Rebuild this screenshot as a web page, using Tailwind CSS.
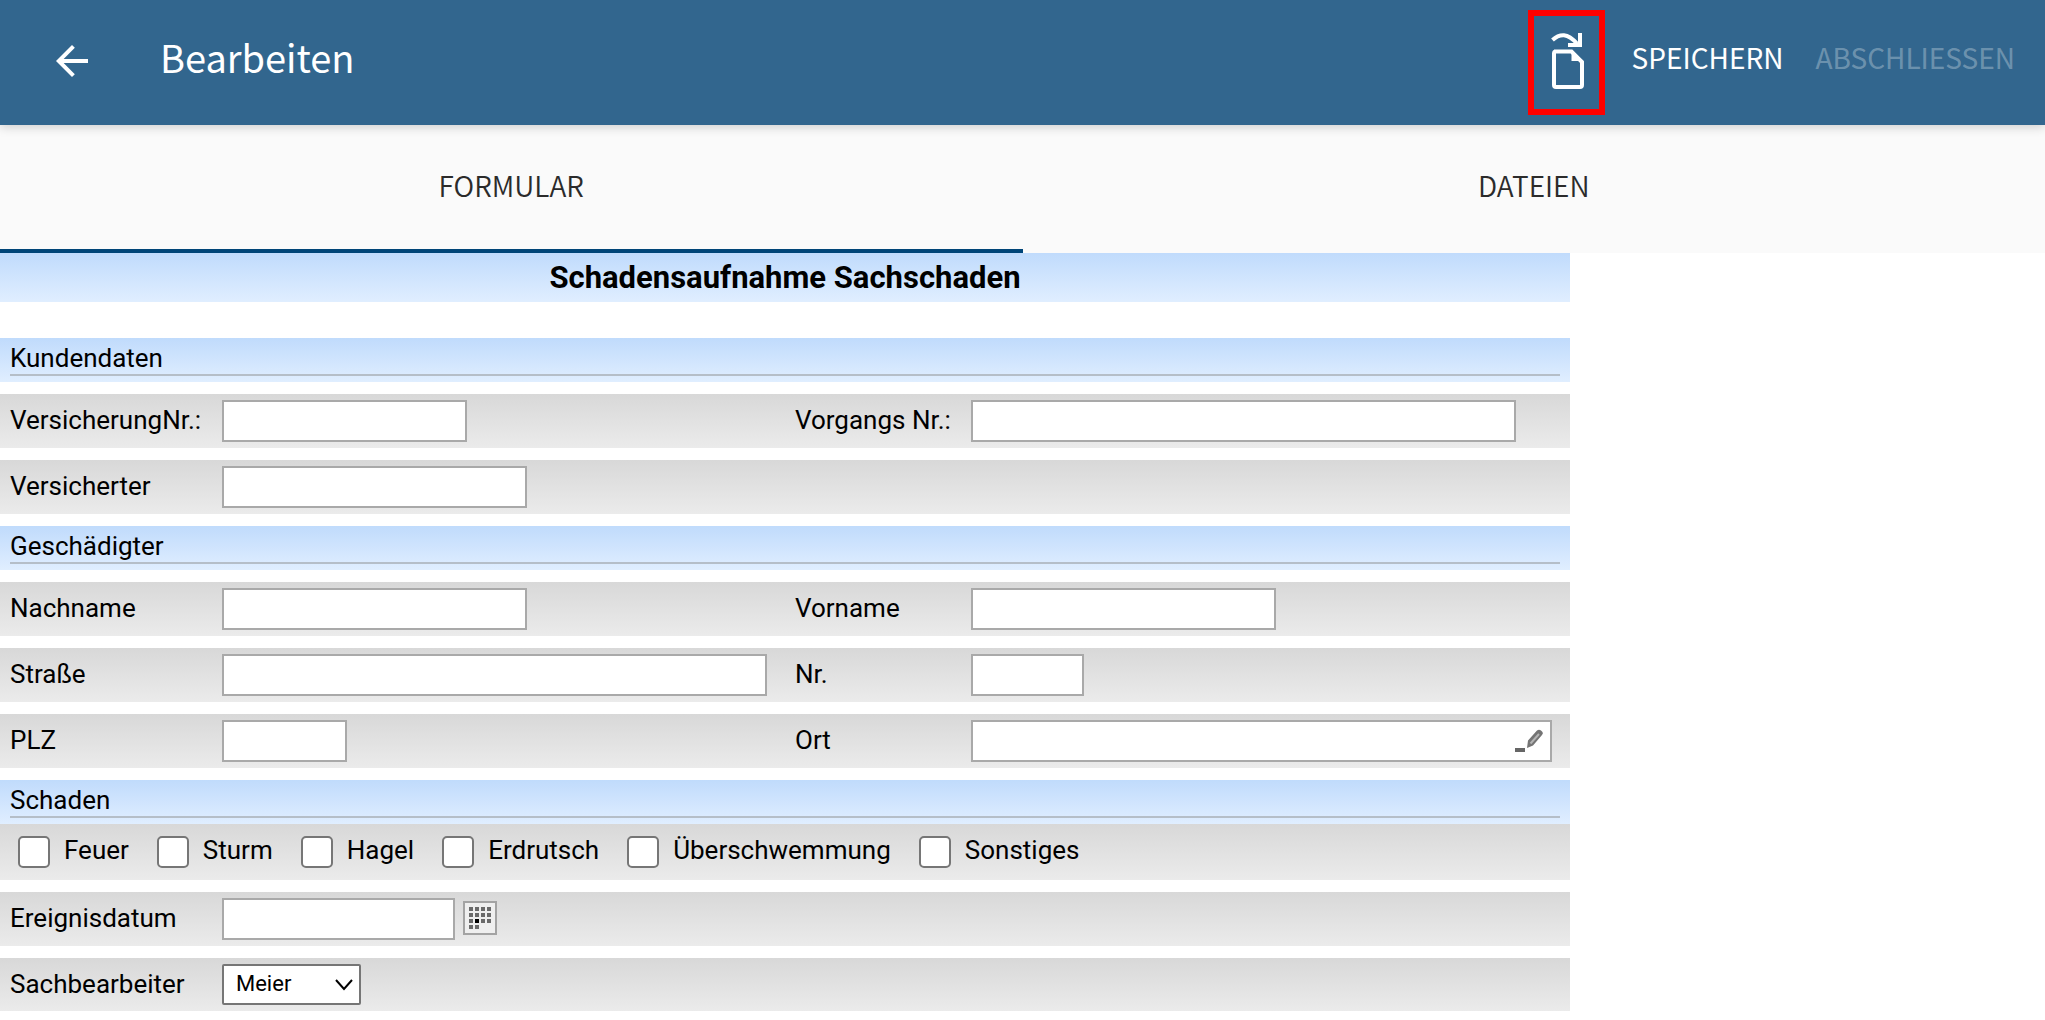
<!DOCTYPE html>
<html lang="de">
<head>
<meta charset="utf-8">
<meta name="viewport" content="width=device-width, initial-scale=1">
<title>Bearbeiten</title>
<script src="https://cdn.jsdelivr.net/npm/@tailwindcss/browser@4"></script>
</head>
<body class="bg-white text-black font-['Roboto',sans-serif] text-[26px] leading-8">

<header class="relative z-10 flex h-[125px] items-center bg-[#32668e] pb-1 pl-12 pr-[30px] text-white shadow-[0_2px_10px_rgba(0,0,0,0.18)] font-['Noto_Sans_CJK_SC','Noto_Sans',sans-serif]">
  <button type="button" aria-label="Zurück" class="flex size-12 items-center justify-center">
    <svg class="size-12" viewBox="0 0 24 24" fill="currentColor" aria-hidden="true"><path d="M20 11H7.830l5.590-5.590L12 4l-8 8 8 8 1.410-1.410L7.830 13H20z"/></svg>
  </button>
  <h1 class="ml-16 pb-2 text-[38px] leading-[48px]">Bearbeiten</h1>
  <div class="ml-auto flex items-center gap-[27px]">
    <button type="button" aria-label="Weiterleiten" class="mt-1 flex h-[105px] w-[77px] items-center justify-center border-6 border-[#ff0000] pb-[3px] pl-1">
      <svg class="h-[56px] w-[34px]" viewBox="0 0 34 56" fill="none" stroke="currentColor" aria-hidden="true">
        <path d="M1.500 7Q7 1.800 13 2.200Q19 2.800 26 10.500" stroke-width="4"/>
        <path d="M29 0V12H17" stroke-width="4"/>
        <path d="M3 18.500H20.500L31 29V52Q31 54 29 54H5Q3 54 3 52V20.500Q3 18.500 5 18.500" stroke-width="4"/>
        <path d="M20.500 17V28H32.500z" fill="currentColor" stroke="none"/>
      </svg>
    </button>
    <div class="flex gap-8 pb-2 text-[28px] leading-9">
      <button type="button">SPEICHERN</button>
      <button type="button" disabled class="text-white/30">ABSCHLIESSEN</button>
    </div>
  </div>
</header>

<nav class="grid h-32 grid-cols-2 bg-[#fafafa] text-[28px] font-[350] text-[#2b2b2b] font-['Noto_Sans_CJK_SC','Noto_Sans',sans-serif]">
  <a href="#formular" aria-current="page" class="flex items-center justify-center border-b-4 border-[#004578] pb-1">FORMULAR</a>
  <a href="#dateien" class="flex items-center justify-center border-b-4 border-transparent pb-1">DATEIEN</a>
</nav>

<form id="formular" class="w-full max-w-[1570px]">
  <h2 class="mb-9 flex h-[49px] items-center justify-center bg-linear-to-b from-[#c0dbfc] to-[#e0eeff] text-[31px] font-bold">Schadensaufnahme Sachschaden</h2>

  <div class="flex flex-col gap-3">
    <div class="h-11 bg-linear-to-b from-[#c0dbfc] to-[#e0eeff] px-[10px]">
      <h3 class="h-[38px] border-b-2 border-[#b5bec8] pt-1">Kundendaten</h3>
    </div>
    <div class="grid h-[54px] grid-cols-[212px_573px_176px_1fr] items-center bg-linear-to-b from-[#d8d8d8] to-[#ebebeb] px-[10px]">
      <label for="versnr" class="pb-[2px]">VersicherungNr.:</label>
      <input id="versnr" type="text" class="h-[42px] w-[245px] border-2 border-[#a9a9a9] bg-white px-2">
      <label for="vorgang" class="pb-[2px]">Vorgangs Nr.:</label>
      <input id="vorgang" type="text" class="h-[42px] w-[545px] border-2 border-[#a9a9a9] bg-white px-2">
    </div>
    <div class="grid h-[54px] grid-cols-[212px_573px_176px_1fr] items-center bg-linear-to-b from-[#d8d8d8] to-[#ebebeb] px-[10px]">
      <label for="versicherter" class="pb-[2px]">Versicherter</label>
      <input id="versicherter" type="text" class="h-[42px] w-[305px] border-2 border-[#a9a9a9] bg-white px-2">
    </div>

    <div class="h-11 bg-linear-to-b from-[#c0dbfc] to-[#e0eeff] px-[10px]">
      <h3 class="h-[38px] border-b-2 border-[#b5bec8] pt-1">Geschädigter</h3>
    </div>
    <div class="grid h-[54px] grid-cols-[212px_573px_176px_1fr] items-center bg-linear-to-b from-[#d8d8d8] to-[#ebebeb] px-[10px]">
      <label for="nachname" class="pb-[2px]">Nachname</label>
      <input id="nachname" type="text" class="h-[42px] w-[305px] border-2 border-[#a9a9a9] bg-white px-2">
      <label for="vorname" class="pb-[2px]">Vorname</label>
      <input id="vorname" type="text" class="h-[42px] w-[305px] border-2 border-[#a9a9a9] bg-white px-2">
    </div>
    <div class="grid h-[54px] grid-cols-[212px_573px_176px_1fr] items-center bg-linear-to-b from-[#d8d8d8] to-[#ebebeb] px-[10px]">
      <label for="strasse" class="pb-[2px]">Straße</label>
      <input id="strasse" type="text" class="h-[42px] w-[545px] border-2 border-[#a9a9a9] bg-white px-2">
      <label for="hausnr" class="pb-[2px]">Nr.</label>
      <input id="hausnr" type="text" class="h-[42px] w-[113px] border-2 border-[#a9a9a9] bg-white px-2">
    </div>
    <div class="grid h-[54px] grid-cols-[212px_573px_176px_1fr] items-center bg-linear-to-b from-[#d8d8d8] to-[#ebebeb] px-[10px]">
      <label for="plz" class="pb-[2px]">PLZ</label>
      <input id="plz" type="text" class="h-[42px] w-[125px] border-2 border-[#a9a9a9] bg-white px-2">
      <label for="ort" class="pb-[2px]">Ort</label>
      <div class="flex h-[42px] w-[581px] items-center border-2 border-[#a9a9a9] bg-white pr-[6px]">
        <input id="ort" type="text" class="h-full min-w-0 flex-1 px-2">
        <svg class="h-6 w-[30px]" viewBox="0 0 30 24" aria-hidden="true">
          <path d="M1 19h10v4H1z" fill="#666"/>
          <path d="M13 19l1-7.500L23 1.500Q25 0 27 1.500L28.500 3Q29.500 4.500 28 6L19 16.500z" fill="#747474"/>
          <path d="M16.500 14.500L25 5" stroke="#b4b4b4" stroke-width="2"/>
        </svg>
      </div>
    </div>

    <div>
      <div class="h-11 bg-linear-to-b from-[#c0dbfc] to-[#e0eeff] px-[10px]">
        <h3 class="h-[38px] border-b-2 border-[#b5bec8] pt-1">Schaden</h3>
      </div>
      <div class="flex h-14 items-center gap-7 bg-linear-to-b from-[#d8d8d8] to-[#ebebeb] px-[18px] pb-1">
        <label class="flex items-center gap-[14px]"><input type="checkbox" class="mt-1 size-8 appearance-none rounded-[5px] border-2 border-[#767676] bg-white">Feuer</label>
        <label class="flex items-center gap-[14px]"><input type="checkbox" class="mt-1 size-8 appearance-none rounded-[5px] border-2 border-[#767676] bg-white">Sturm</label>
        <label class="flex items-center gap-[14px]"><input type="checkbox" class="mt-1 size-8 appearance-none rounded-[5px] border-2 border-[#767676] bg-white">Hagel</label>
        <label class="flex items-center gap-[14px]"><input type="checkbox" class="mt-1 size-8 appearance-none rounded-[5px] border-2 border-[#767676] bg-white">Erdrutsch</label>
        <label class="flex items-center gap-[14px]"><input type="checkbox" class="mt-1 size-8 appearance-none rounded-[5px] border-2 border-[#767676] bg-white">Überschwemmung</label>
        <label class="flex items-center gap-[14px]"><input type="checkbox" class="mt-1 size-8 appearance-none rounded-[5px] border-2 border-[#767676] bg-white">Sonstiges</label>
      </div>
    </div>

    <div class="grid h-[54px] grid-cols-[212px_573px_176px_1fr] items-center bg-linear-to-b from-[#d8d8d8] to-[#ebebeb] px-[10px]">
      <label for="datum" class="pb-[2px]">Ereignisdatum</label>
      <div class="flex items-center gap-2">
        <input id="datum" type="text" class="h-[42px] w-[233px] border-2 border-[#a9a9a9] bg-white px-2">
        <button type="button" aria-label="Kalender öffnen" class="pb-[2px]">
          <svg class="size-[34px]" viewBox="0 0 34 34" aria-hidden="true">
            <path d="M1 1h32v32H1z" fill="#efefef" stroke="#a3a3a3" stroke-width="2"/>
            <path d="M6 8h22M6 14h22M6 20h22M6 26h10" stroke="#6a6a6a" stroke-width="4" stroke-dasharray="4 2"/>
            <path d="M12 18h4v4h-4z" fill="#000"/>
          </svg>
        </button>
      </div>
    </div>
    <div class="grid h-[53px] grid-cols-[212px_573px_176px_1fr] items-center bg-linear-to-b from-[#d8d8d8] to-[#ebebeb] px-[10px]">
      <label for="bearbeiter" class="pb-[2px]">Sachbearbeiter</label>
      <div class="grid w-[139px] items-center">
        <select id="bearbeiter" class="col-start-1 row-start-1 h-[41px] appearance-none rounded-[2px] border-2 border-[#767676] bg-white pb-[2px] pl-3 pr-9 text-[22px] leading-8">
          <option>Meier</option>
        </select>
        <svg class="pointer-events-none col-start-1 row-start-1 mr-[7px] h-3 w-5 justify-self-end" viewBox="0 0 20 12" fill="none" stroke="#000" stroke-width="2" aria-hidden="true"><path d="M2 1l8 9 8-9"/></svg>
      </div>
    </div>
  </div>
</form>
</body>
</html>
